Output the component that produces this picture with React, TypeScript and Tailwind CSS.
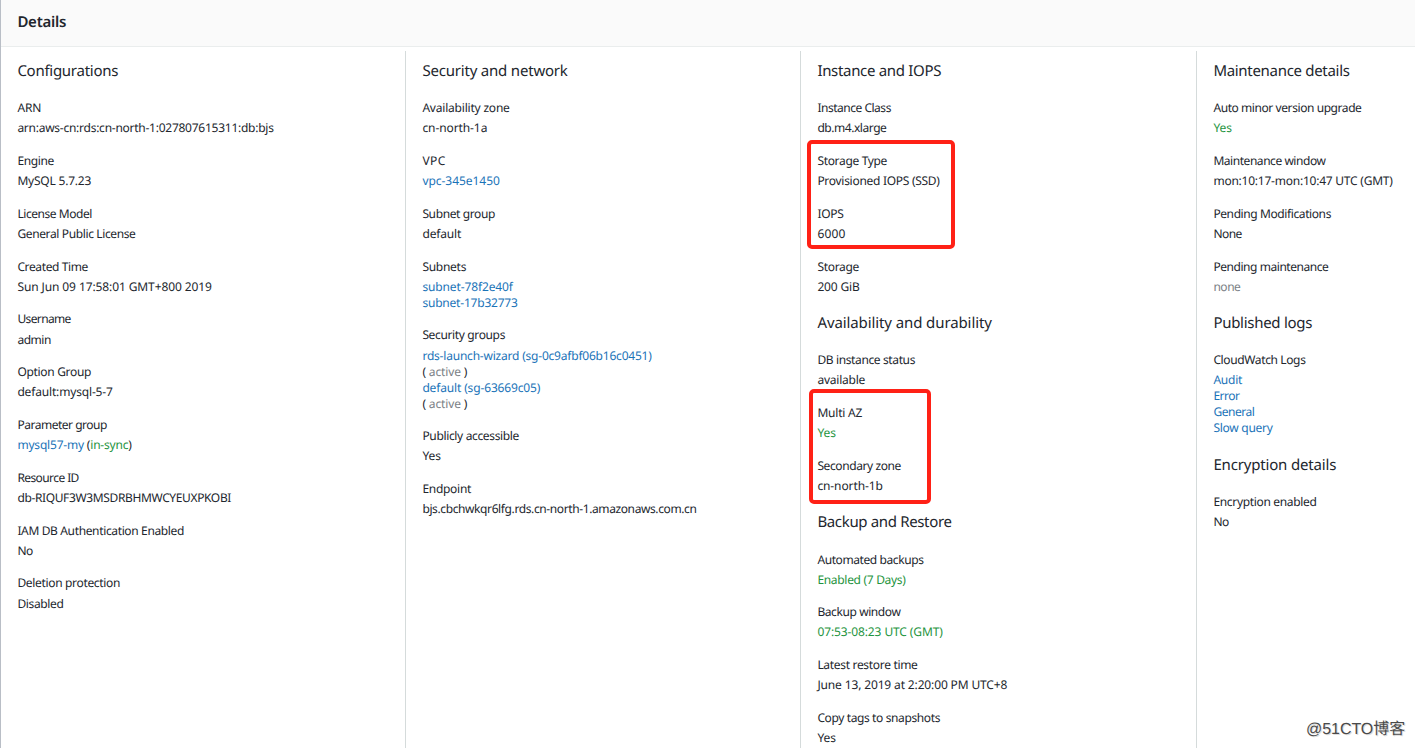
import { useLayoutEffect, useRef, useState } from "react";
import type { ReactNode } from "react";

type Tone = "text" | "link" | "good" | "muted";

const tones: Record<Tone, string> = {
  text: "text-[#22262d]",
  link: "text-[#1a73b8]",
  good: "text-[#1e9440]",
  muted: "text-[#7b8186]",
};

/** Text whose letter spacing is adjusted so that the line is `w` pixels wide. */
function T({ tone = "text", w, children }: { tone?: Tone; w?: number; children: ReactNode }) {
  const ref = useRef<HTMLSpanElement>(null);
  const [spacing, setSpacing] = useState(0);
  useLayoutEffect(() => {
    const el = ref.current;
    if (!el || !w) return;
    const gaps = Math.max(1, (el.textContent?.length ?? 2) - 1);
    setSpacing((w - el.getBoundingClientRect().width) / gaps);
  }, [w]);
  return (
    <span ref={ref} className={tones[tone]} style={w ? { letterSpacing: spacing } : undefined}>
      {children}
    </span>
  );
}

function Section({ title, w, children }: { title: string; w: number; children: ReactNode }) {
  return (
    <section className="mb-[18.3px]">
      <h3 className="mb-[19.3px] h-5 text-[15px] leading-5">
        <T w={w}>{title}</T>
      </h3>
      <dl className="flex flex-col gap-[16.75px]">{children}</dl>
    </section>
  );
}

function Field({ label, w, children }: { label: string; w: number; children: ReactNode }) {
  return (
    <div>
      <dt className="mb-[4.05px] h-4 leading-4">
        <T w={w}>{label}</T>
      </dt>
      <dd className="flex flex-col items-start leading-4">{children}</dd>
    </div>
  );
}

function Column({ children }: { children: ReactNode }) {
  return <div className="border-l border-[#d5dbdb] pt-[10px] pl-[16.4px]">{children}</div>;
}

export default function App() {
  return (
    <div className="relative h-[748px] w-[1415px] overflow-hidden border-l border-[#b9bec6] bg-white font-['Noto_Sans','Noto_Sans_CJK_SC',sans-serif] text-[12px] whitespace-nowrap text-[#22262d] [text-rendering:geometricPrecision]">
      <header className="flex h-[47px] items-center border-b border-[#eaeded] bg-[#fafafa] pb-[2px] pl-[16.4px]">
        <h2 className="text-[15px] leading-6 font-semibold">
          <T w={49}>Details</T>
        </h2>
      </header>
      <main className="mt-1 grid h-[720px] grid-cols-[404px_395px_396px_1fr]">
        <div className="pt-[10px] pl-[16.4px]">
          <Section title="Configurations" w={101}>
            <Field label="ARN" w={24}><T w={256.5}>arn:aws-cn:rds:cn-north-1:027807615311:db:bjs</T></Field>
            <Field label="Engine" w={37}><T w={74}>MySQL 5.7.23</T></Field>
            <Field label="License Model" w={75}><T w={118.5}>General Public License</T></Field>
            <Field label="Created Time" w={71}><T w={194.5}>Sun Jun 09 17:58:01 GMT+800 2019</T></Field>
            <Field label="Username" w={54}><T w={34}>admin</T></Field>
            <Field label="Option Group" w={74}><T w={95.5}>default:mysql-5-7</T></Field>
            <Field label="Parameter group" w={90}>
              <T w={114.5}><T tone="link">mysql57-my</T> (<T tone="good">in-sync</T>)</T>
            </Field>
            <Field label="Resource ID" w={62}><T w={214}>db-RIQUF3W3MSDRBHMWCYEUXPKOBI</T></Field>
            <Field label="IAM DB Authentication Enabled" w={167}><T w={16}>No</T></Field>
            <Field label="Deletion protection" w={103}><T w={46.5}>Disabled</T></Field>
          </Section>
        </div>
        <Column>
          <Section title="Security and network" w={145.5}>
            <Field label="Availability zone" w={87.5}><T w={65}>cn-north-1a</T></Field>
            <Field label="VPC" w={23}><T w={77.5} tone="link">vpc-345e1450</T></Field>
            <Field label="Subnet group" w={73}><T w={39}>default</T></Field>
            <Field label="Subnets" w={44}>
              <T w={90.5} tone="link">subnet-78f2e40f</T>
              <T w={95.5} tone="link">subnet-17b32773</T>
            </Field>
            <Field label="Security groups" w={83}>
              <T w={229.5} tone="link">rds-launch-wizard (sg-0c9afbf06b16c0451)</T>
              <T w={45}>( <T tone="muted">active</T> )</T>
              <T w={118} tone="link">default (sg-63669c05)</T>
              <T w={45}>( <T tone="muted">active</T> )</T>
            </Field>
            <Field label="Publicly accessible" w={97}><T w={18.5}>Yes</T></Field>
            <Field label="Endpoint" w={49}><T w={274.5}>bjs.cbchwkqr6lfg.rds.cn-north-1.amazonaws.com.cn</T></Field>
          </Section>
        </Column>
        <Column>
          <Section title="Instance and IOPS" w={124}>
            <Field label="Instance Class" w={74}><T w={69.5}>db.m4.xlarge</T></Field>
            <Field label="Storage Type" w={70}><T w={122.5}>Provisioned IOPS (SSD)</T></Field>
            <Field label="IOPS" w={26.5}><T w={28}>6000</T></Field>
            <Field label="Storage" w={42}><T w={42.5}>200 GiB</T></Field>
          </Section>
          <Section title="Availability and durability" w={174.5}>
            <Field label="DB instance status" w={98}><T w={48}>available</T></Field>
            <Field label="Multi AZ" w={45}><T w={18.5} tone="good">Yes</T></Field>
            <Field label="Secondary zone" w={84}><T w={65.5}>cn-north-1b</T></Field>
          </Section>
          <Section title="Backup and Restore" w={134.5}>
            <Field label="Automated backups" w={106.5}><T w={88.5} tone="good">Enabled (7 Days)</T></Field>
            <Field label="Backup window" w={83.5}><T w={125.5} tone="good">07:53-08:23 UTC (GMT)</T></Field>
            <Field label="Latest restore time" w={100.5}><T w={190}>June 13, 2019 at 2:20:00 PM UTC+8</T></Field>
            <Field label="Copy tags to snapshots" w={123}><T w={18.5}>Yes</T></Field>
          </Section>
        </Column>
        <Column>
          <Section title="Maintenance details" w={136.5}>
            <Field label="Auto minor version upgrade" w={148.5}><T w={18.5} tone="good">Yes</T></Field>
            <Field label="Maintenance window" w={112.5}><T w={179.5}>mon:10:17-mon:10:47 UTC (GMT)</T></Field>
            <Field label="Pending Modifications" w={118}><T w={29}>None</T></Field>
            <Field label="Pending maintenance" w={115.5}><T w={27.5} tone="muted">none</T></Field>
          </Section>
          <Section title="Published logs" w={99}>
            <Field label="CloudWatch Logs" w={92.5}>
              <T w={29} tone="link">Audit</T>
              <T w={26.5} tone="link">Error</T>
              <T w={41.5} tone="link">General</T>
              <T w={59.5} tone="link">Slow query</T>
            </Field>
          </Section>
          <Section title="Encryption details" w={123}>
            <Field label="Encryption enabled" w={103.5}><T w={16}>No</T></Field>
          </Section>
        </Column>
      </main>
      <div className="absolute top-[140px] left-[806px] h-[109px] w-[148px] rounded-[5px] border-4 border-[#ff2116]" />
      <div className="absolute top-[389px] left-[808px] h-[115px] w-[122px] rounded-[5px] border-4 border-[#ff2116]" />
      <div className="absolute top-[720px] left-[1305px] font-['Liberation_Sans','Noto_Sans_CJK_SC',sans-serif] text-[16px] leading-5 tracking-[-0.05px] text-[#4a4a4a] [text-shadow:1px_1px_0_#ddd]">
        @51CTO博客
      </div>
    </div>
  );
}
